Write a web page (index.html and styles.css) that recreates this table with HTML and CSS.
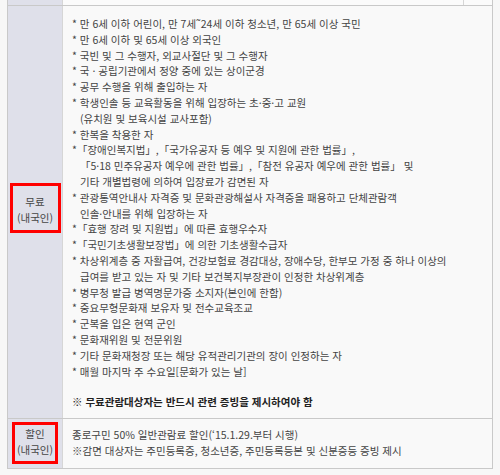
FILE: index.html
```html
<!DOCTYPE html>
<html lang="ko">
<head>
    <meta charset="UTF-8">
    <meta name="viewport" content="width=device-width, initial-scale=1.0">
    <title>관람료 감면 안내</title>
    <link rel="stylesheet" href="styles.css">
</head>
<body>

<table class="fees">
    <tr class="cut">
        <th></th>
        <td><div class="cut-col"></div></td>
    </tr>
    <tr>
        <th><div class="mark mark-free">무료<br>(내국인)</div></th>
        <td class="free">
            <ul class="rules">
                <li>* 만 6세 이하 어린이, 만 7세˜24세 이하 청소년, 만 65세 이상 국민</li>
                <li>* 만 6세 이하 및 65세 이상 외국인</li>
                <li>* 국빈 및 그 수행자, 외교사절단 및 그 수행자</li>
                <li>* 국 · 공립기관에서 정양 중에 있는 상이군경</li>
                <li>* 공무 수행을 위해 출입하는 자</li>
                <li>* 학생인솔 등 교육활동을 위해 입장하는 초·중·고 교원<br>(유치원 및 보육시설 교사포함)</li>
                <li>* 한복을 착용한 자</li>
                <li>*「장애인복지법」,「국가유공자 등 예우 및 지원에 관한 법률」,<br>「5·18 민주유공자 예우에 관한 법률」,「참전 유공자 예우에 관한 법률」 및<br>기타 개별법령에 의하여 입장료가 감면된 자</li>
                <li>* 관광통역안내사 자격증 및 문화관광해설사 자격증을 패용하고 단체관람객<br>인솔·안내를 위해 입장하는 자</li>
                <li>*「효행 장려 및 지원법」에 따른 효행우수자</li>
                <li>*「국민기초생활보장법」에 의한 기초생활수급자</li>
                <li>* 차상위계층 중 자활급여, 건강보험료 경감대상, 장애수당, 한부모 가정 중 하나 이상의<br>급여를 받고 있는 자 및 기타 보건복지부장관이 인정한 차상위계층</li>
                <li>* 병무청 발급 병역명문가증 소지자(본인에 한함)</li>
                <li>* 중요무형문화재 보유자 및 전수교육조교</li>
                <li>* 군복을 입은 현역 군인</li>
                <li>* 문화재위원 및 전문위원</li>
                <li>* 기타 문화재청장 또는 해당 유적관리기관의 장이 인정하는 자</li>
                <li>* 매월 마지막 주 수요일[문화가 있는 날]</li>
            </ul>
            <p class="notice">※ 무료관람대상자는 반드시 관련 증빙을 제시하여야 함</p>
        </td>
    </tr>
    <tr>
        <th><div class="mark mark-sale">할인<br>(내국인)</div></th>
        <td class="sale">
            종로구민 50% 일반관람료 할인(‘15.1.29.부터 시행)<br>
            ※감면 대상자는 주민등록증, 청소년증, 주민등록등본 및 신분증등 증빙 제시
        </td>
    </tr>
</table>

</body>
</html>
```

FILE: styles.css
```css
body {
    margin: 0;
    padding: 0 7px;
    background-color: #f7f7f7;
    font-family: "Noto Sans CJK KR", "Noto Sans", sans-serif;
    font-size: 10.5px;
    line-height: 15.8px;
    color: #444;
}
.fees {
    width: 486px;
    border-collapse: collapse;
}
.fees th, .fees td {
    border: 1px solid #c9c9c9;
    padding: 0;
}
.fees th {
    width: 54px;
    background-color: #dfe0ea;
    font-weight: normal;
    text-align: center;
    vertical-align: middle;
    border-right-color: #d6d6d6;
}
.fees td {
    background-color: #f9f9f9;
    white-space: nowrap;
    vertical-align: top;
}
.fees td.free {
    padding: 10px 9px 8px;
}
.fees td.sale {
    padding: 8px 9px 9px;
    line-height: 16px;
}
.fees tr.cut th, .fees tr.cut td {
    border-top: none;
    height: 5px;
    padding: 0;
}
.fees tr.cut td {
    background-color: #fbfbfb;
}
.cut-col {
    width: 400px;
    height: 5px;
    border-right: 1px solid #d6d6d6;
}
.rules {
    list-style: none;
    margin: 0;
    padding: 0;
}
.rules li {
    padding-left: 8px;
    text-indent: -8px;
}
.notice {
    margin: 14.5px 0 0;
    font-weight: bold;
    color: #222;
}
.mark {
    border: 3px solid #f00;
    margin: 0 auto;
}
.mark-free {
    width: 45px;
    padding: 8px 0 4px;
    margin-bottom: 8px;
}
.mark-sale {
    width: 40px;
    padding: 1px 0 3px;
}
```
